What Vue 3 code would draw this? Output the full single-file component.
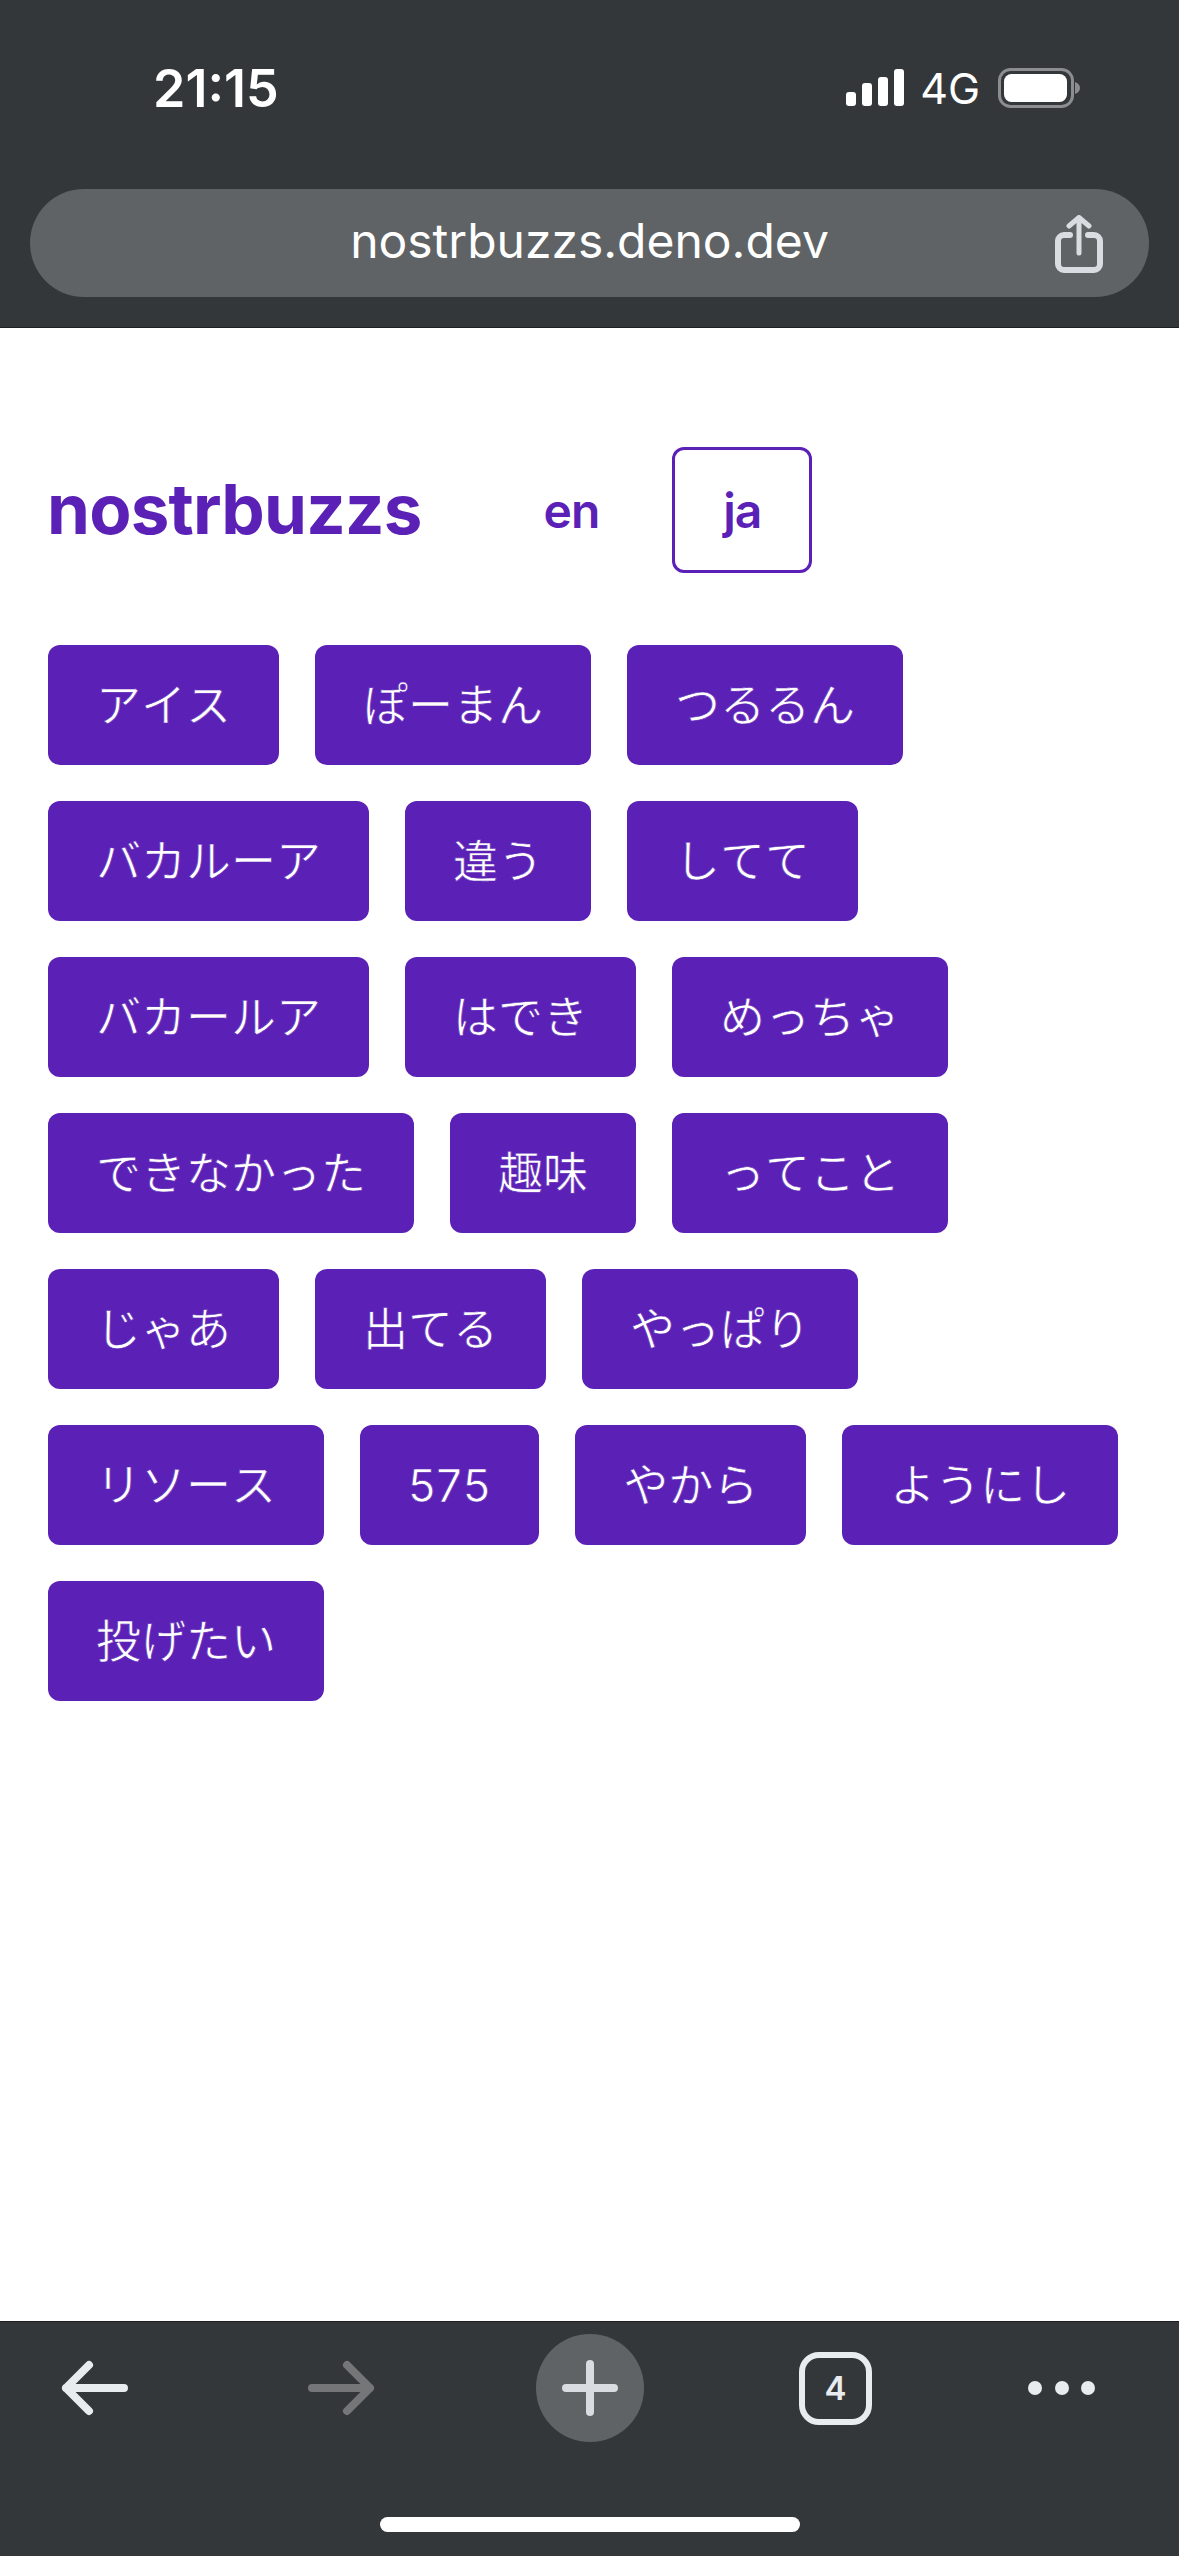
<template>
  <div class="screen">
    <header class="chrome-top">
      <div class="status">
        <span class="time">21:15</span>
        <div class="status-right">
          <div class="signal">
            <i class="bar b1"></i>
            <i class="bar b2"></i>
            <i class="bar b3"></i>
            <i class="bar b4"></i>
          </div>
          <span class="net">4G</span>
          <svg class="battery" width="83" height="40" viewBox="0 0 83 40">
            <rect x="1.5" y="1.5" width="73" height="37" rx="11" fill="none" stroke="#8b8d8f" stroke-width="3" />
            <rect x="6" y="6" width="63" height="28" rx="7.5" fill="#fff" />
            <path d="M77 14c3 1 5 3 5 6s-2 5-5 6z" fill="#8b8d8f" />
          </svg>
        </div>
      </div>
      <div class="address">
        <span class="url">nostrbuzzs.deno.dev</span>
        <svg class="share" width="48" height="60" viewBox="0 0 48 60" fill="none" stroke="#d9dce1" stroke-linecap="round" stroke-linejoin="round">
          <path d="M15 20H9a6 6 0 0 0-6 6v23a6 6 0 0 0 6 6h30a6 6 0 0 0 6-6V26a6 6 0 0 0-6-6h-6" stroke-width="6" />
          <path d="M24 38V4M14 11l10-8.500 10 8.500" stroke-width="5" />
        </svg>
      </div>
    </header>

    <main class="page">
      <div class="head">
        <h1 class="title">nostrbuzzs</h1>
        <nav class="langs">
          <button class="lang">en</button>
          <button class="lang active">ja</button>
        </nav>
      </div>
      <div class="tags">
        <a v-for="t in tags" :key="t" class="tag" :class="{ num: /^\d+$/.test(t) }">{{ t }}</a>
      </div>
    </main>

    <footer class="chrome-bottom">
      <div class="tools">
        <svg class="tool back" width="68" height="56" viewBox="0 0 68 56" fill="none" stroke="#e8ecef" stroke-width="8" stroke-linecap="round" stroke-linejoin="round">
          <path d="M64 28H6M29 5 6 28l23 23" />
        </svg>
        <svg class="tool forward" width="68" height="56" viewBox="0 0 68 56" fill="none" stroke="#757678" stroke-width="8" stroke-linecap="round" stroke-linejoin="round">
          <path d="M4 28h58M39 5l23 23-23 23" />
        </svg>
        <div class="tool plus-wrap">
          <svg width="56" height="56" viewBox="0 0 56 56" stroke="#d9dce1" stroke-width="8" stroke-linecap="round">
            <path d="M28 4v48M4 28h48" />
          </svg>
        </div>
        <div class="tool tabs"><span>4</span></div>
        <div class="tool dots">
          <i></i>
          <i></i>
          <i></i>
        </div>
      </div>
      <div class="home"></div>
    </footer>
  </div>
</template>

<script setup>
const tags = [
  "アイス", "ぽーまん", "つるるん",
  "バカルーア", "違う", "してて",
  "バカールア", "はでき", "めっちゃ",
  "できなかった", "趣味", "ってこと",
  "じゃあ", "出てる", "やっぱり",
  "リソース", "575", "やから", "ようにし",
  "投げたい",
]
</script>

<style>
html,
body {
  margin: 0;
  background: #fff;
}
</style>

<style scoped>
.screen {
  width: 1179px;
  height: 2556px;
  display: flex;
  flex-direction: column;
  overflow: hidden;
  font-family: Inter, "Noto Sans CJK JP", sans-serif;
}

.chrome-top {
  height: 263px;
  background: #34373a;
  border-bottom: 1px solid #1d1f21;
  padding: 64px 30px 0;
}

.status {
  display: flex;
  justify-content: space-between;
  align-items: center;
  height: 48px;
  padding: 0 68px 0 123px;
}

.time {
  color: #fff;
  font-size: 52px;
  font-weight: 600;
}

.status-right {
  display: flex;
  align-items: center;
}

.signal {
  display: flex;
  align-items: flex-end;
  gap: 6px;
  height: 37px;
  margin-top: -1px;
}

.bar {
  display: block;
  width: 10px;
  background: #fff;
  border-radius: 3px;
}

.b1 { height: 14px; }
.b2 { height: 23px; }
.b3 { height: 29px; }
.b4 { height: 37px; }

.net {
  color: #fff;
  font-size: 43px;
  margin: 0 18px 0 16px;
}

.battery {
  display: block;
}

.address {
  margin-top: 77px;
  height: 108px;
  border-radius: 54px;
  background: #5f6366;
  display: flex;
  align-items: center;
  justify-content: center;
  position: relative;
}

.url {
  color: #fff;
  font-size: 48px;
  margin-bottom: 5px;
}

.share {
  position: absolute;
  right: 46px;
  top: 26px;
}

.page {
  flex: 1;
  padding: 119px 48px 0;
  background: #fff;
}

.head {
  display: flex;
  align-items: center;
  gap: 71px;
  margin-bottom: 72px;
}

.title {
  margin: 0 0 2px -1px;
  color: #5b21b6;
  font-size: 69px;
  font-weight: 700;
  letter-spacing: -0.8px;
  line-height: 72px;
}

.langs {
  display: flex;
  gap: 22px;
}

.lang {
  height: 126px;
  padding: 0 48px;
  border: 3px solid transparent;
  border-radius: 12px;
  background: none;
  color: #5b21b6;
  font-family: inherit;
  font-size: 48px;
  font-weight: 600;
  letter-spacing: -1px;
}

.lang.active {
  border-color: #5b21b6;
}

.tags {
  display: flex;
  flex-wrap: wrap;
  gap: 36px;
}

.tag {
  display: block;
  padding: 37px 48px 35px;
  line-height: 48px;
  font-size: 45px;
  font-kerning: none;
  color: #fff;
  background: #5b21b6;
  border-radius: 12px;
  -webkit-text-stroke: 0.6px #5b21b6;
}

.tag.num {
  letter-spacing: 1px;
}

.chrome-bottom {
  height: 234px;
  background: #34373a;
  border-top: 1px solid #1d1f21;
  position: relative;
}

.tools {
  display: flex;
  align-items: center;
  height: 132px;
  padding-left: 60px;
}

.tool {
  flex: none;
}

.forward { margin-left: 180px; }

.plus-wrap {
  margin-left: 160px;
  width: 108px;
  height: 108px;
  border-radius: 50%;
  background: #5f6366;
  display: flex;
  align-items: center;
  justify-content: center;
}

.tabs {
  margin-left: 155px;
  width: 73px;
  height: 73px;
  box-sizing: border-box;
  border: 6px solid #e8ecef;
  border-radius: 20px;
  display: flex;
  align-items: center;
  justify-content: center;
  color: #e8ecef;
  font-size: 33px;
  font-weight: 600;
}

.dots {
  margin-left: 156px;
  width: 67px;
  display: flex;
  justify-content: space-between;
}

.dots i {
  display: block;
  width: 14px;
  height: 14px;
  border-radius: 50%;
  background: #e8ecef;
}

.home {
  position: absolute;
  left: 380px;
  bottom: 24px;
  width: 420px;
  height: 15px;
  border-radius: 8px;
  background: #fff;
}
</style>
